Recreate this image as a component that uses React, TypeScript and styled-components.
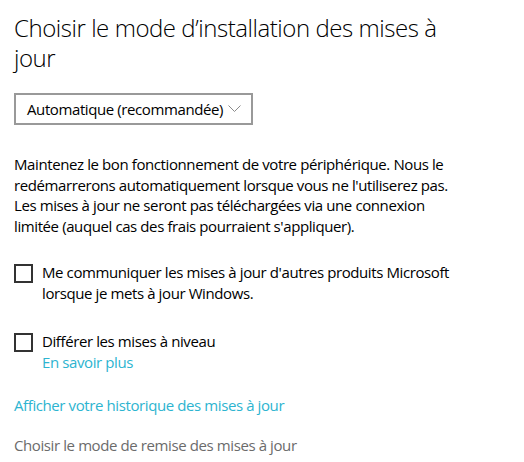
import React from "react";
import styled, { createGlobalStyle } from "styled-components";

const GlobalStyle = createGlobalStyle`
  html, body {
    margin: 0;
    background: #ffffff;
  }
  body {
    font-family: "Open Sans", "Noto Sans", sans-serif;
    font-size: 15px;
    letter-spacing: -0.4px;
    color: #000000;
  }
`;

const Page = styled.div`
  display: flex;
  flex-direction: column;
  align-items: flex-start;
  padding: 13px 0 0 14px;
  width: 524px;
  height: 462px;
  box-sizing: border-box;
  overflow: hidden;
`;

const Title = styled.h1`
  margin: 0;
  max-width: 450px;
  font-size: 24px;
  font-weight: 300;
  line-height: 30px;
  letter-spacing: -0.45px;
`;

const Select = styled.div`
  display: flex;
  align-items: center;
  justify-content: space-between;
  box-sizing: border-box;
  width: 239px;
  height: 32px;
  margin-top: 20px;
  padding: 0 10px 0 11px;
  border: 2px solid #999999;
  line-height: 20.5px;

  svg {
    flex: none;
  }
`;

const Paragraph = styled.p`
  margin: 29px 0 0;
  max-width: 445px;
  line-height: 20.5px;
`;

const CheckRow = styled.label<{ $gap: number }>`
  display: flex;
  align-items: flex-start;
  gap: 9px;
  margin-top: ${(p) => p.$gap}px;
  line-height: 20.5px;
`;

const Box = styled.span`
  flex: none;
  box-sizing: border-box;
  width: 19px;
  height: 19px;
  margin-top: 2px;
  border: 2px solid #333333;
`;

const LabelText = styled.span`
  display: flex;
  flex-direction: column;
  max-width: 420px;
`;

const Link = styled.a<{ $gap?: number }>`
  display: block;
  margin-top: ${(p) => p.$gap ?? 0}px;
  color: #2db4d0;
  text-decoration: none;
  line-height: 20.5px;
`;

const Muted = styled.a`
  display: block;
  margin-top: 19px;
  color: #6b6b6b;
  line-height: 20.5px;
`;

const Chevron: React.FC = () => (
  <svg width="13" height="8" viewBox="0 0 13 8">
    <polyline points="0.5,0.5 6.5,6.5 12.5,0.5" fill="none" stroke="#8a8a8a" strokeWidth="1" />
  </svg>
);

const App: React.FC = () => {
  return (
    <>
      <GlobalStyle />
      <Page>
        <Title>Choisir le mode d’installation des mises à jour</Title>

        <Select>
          <span>Automatique (recommandée)</span>
          <Chevron />
        </Select>

        <Paragraph>
          Maintenez le bon fonctionnement de votre périphérique. Nous le
          redémarrerons automatiquement lorsque vous ne l'utiliserez pas. Les
          mises à jour ne seront pas téléchargées via une connexion limitée
          (auquel cas des frais pourraient s'appliquer).
        </Paragraph>

        <CheckRow $gap={26}>
          <Box />
          <LabelText>
            Me communiquer les mises à jour d'autres produits Microsoft lorsque
            je mets à jour Windows.
          </LabelText>
        </CheckRow>

        <CheckRow $gap={28}>
          <Box />
          <LabelText>
            <span>Différer les mises à niveau</span>
            <Link>En savoir plus</Link>
          </LabelText>
        </CheckRow>

        <Link $gap={23}>Afficher votre historique des mises à jour</Link>

        <Muted>Choisir le mode de remise des mises à jour</Muted>
      </Page>
    </>
  );
};

export default App;
